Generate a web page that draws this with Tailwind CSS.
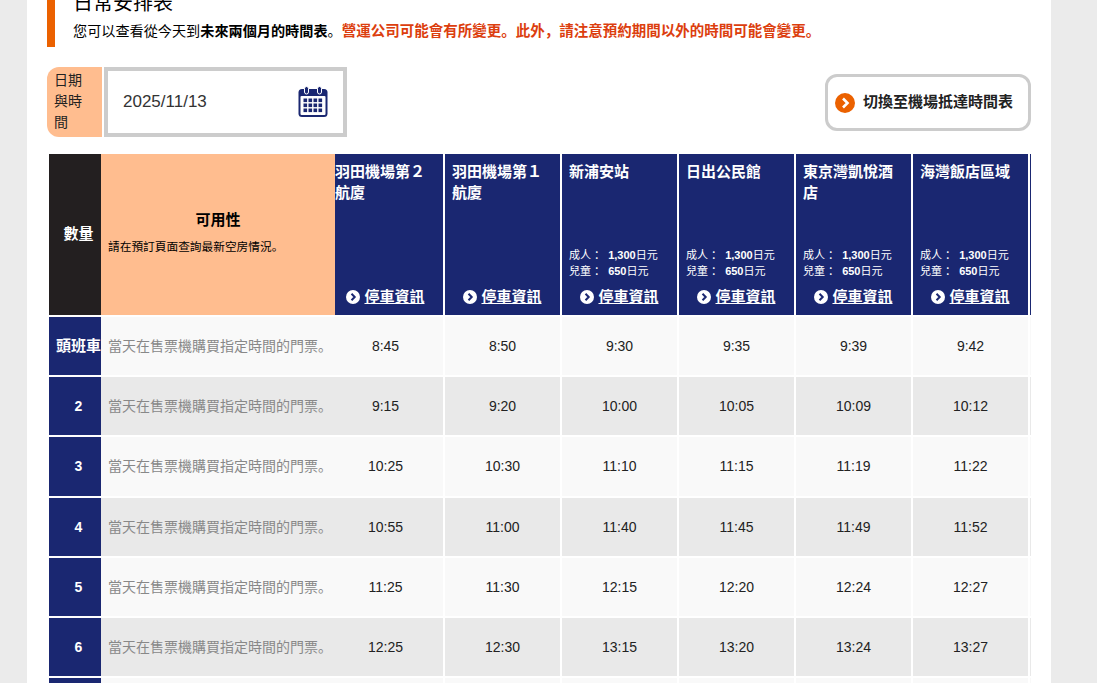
<!DOCTYPE html>
<html lang="zh">
<head>
    <meta charset="UTF-8">
    <title>日常安排表</title>
    <script src="https://cdn.jsdelivr.net/npm/@tailwindcss/browser@4"></script>
</head>
<body class="h-[683px] overflow-hidden bg-[#ebebeb] font-['Liberation_Sans','Noto_Sans_CJK_SC',sans-serif] text-[14px] text-[#222]">
    <main class="ml-[27px] w-[1024px] h-[683px] overflow-hidden bg-white px-5">
        <!-- Heading -->
        <div class="-mt-[20px] border-l-8 border-[#eb6100] pl-[18px] pt-[10px] pb-[6px]">
            <h2 class="text-[20px] leading-[26px] font-normal text-black">日常安排表</h2>
            <p class="mt-[5px] text-[14.15px] leading-[20px] text-black whitespace-nowrap">您可以查看從今天到<b>未來兩個月的時間表</b>。<b class="text-[14.5px] text-[#dc3e0e]">營運公司可能會有所變更。此外，請注意預約期間以外的時間可能會變更。</b></p>
        </div>

        <!-- Date picker + switch -->
        <div class="mt-5 flex items-start justify-between h-[87px]">
            <div class="flex">
                <div class="w-[55px] h-[70px] rounded-l-[12px] bg-[#ffbd8f] pl-[7px] pr-[10px] pt-[3px] leading-[21px]">日期與時間</div>
                <div class="ml-[2px] w-[243px] h-[70px] border-4 border-[#ccc] bg-white flex items-center justify-between pl-[15px] pr-[15px]">
                    <span class="text-[17px] text-[#333]">2025/11/13</span>
                    <svg class="w-[30px] h-[32px]" viewBox="0 0 30 32">
                        <rect x="0.5" y="3" width="29" height="28" rx="3.5" fill="#1a2771"/>
                        <rect x="2.5" y="10" width="25" height="19" rx="1" fill="#fff"/>
                        <rect x="6.5" y="0.5" width="4" height="7.5" rx="2" fill="#1a2771" stroke="#fff"/>
                        <rect x="19.5" y="0.5" width="4" height="7.5" rx="2" fill="#1a2771" stroke="#fff"/>
                        <g fill="#1a2771">
                            <rect x="5.5" y="12.5" width="3.6" height="3.6"/><rect x="10.5" y="12.5" width="3.6" height="3.6"/><rect x="15.5" y="12.5" width="3.6" height="3.6"/><rect x="20.5" y="12.5" width="3.6" height="3.6"/>
                            <rect x="5.5" y="17.5" width="3.6" height="3.6"/><rect x="10.5" y="17.5" width="3.6" height="3.6"/><rect x="15.5" y="17.5" width="3.6" height="3.6"/><rect x="20.5" y="17.5" width="3.6" height="3.6"/>
                            <rect x="5.5" y="22.5" width="3.6" height="3.6"/><rect x="10.5" y="22.5" width="3.6" height="3.6"/><rect x="15.5" y="22.5" width="3.6" height="3.6"/><rect x="20.5" y="22.5" width="3.6" height="3.6"/>
                        </g>
                    </svg>
                </div>
            </div>
            <a class="mt-[7px] w-[206px] h-[57px] rounded-[12px] border-[3px] border-[#ccc] bg-white flex items-center pl-[7px] gap-2 text-[15px] font-bold whitespace-nowrap">
                <svg class="w-5 h-5 shrink-0" viewBox="0 0 20 20"><circle cx="10" cy="10" r="10" fill="#eb6100"/><path d="M8 5.5 12.5 10 8 14.5" fill="none" stroke="#fff" stroke-width="2.6"/></svg>
                切換至機場抵達時間表
            </a>
        </div>

        <!-- Timetable -->
        <div class="ml-[2px] w-[982px] overflow-hidden">
            <table class="table-fixed w-[983px] border-separate border-spacing-0">
                <colgroup>
                    <col class="w-[52px]"><col class="w-[234px]"><col class="w-[110px]"><col class="w-[117px]"><col class="w-[117px]"><col class="w-[117px]"><col class="w-[117px]"><col class="w-[117px]"><col class="w-[2px]">
                </colgroup>
                <thead>
                    <tr class="h-[163px]">
                        <th class="border-b-2 border-white bg-[#231f20] pl-[7px] text-white text-[15px]">數量</th>
                        <th class="border-b-2 border-white bg-[#ffbd8f] text-left font-normal text-black">
                            <div class="text-center text-[15px] leading-[20px] font-bold">可用性</div>
                            <p class="mt-[9px] pb-[4px] pl-[7px] text-[11.7px] leading-[16px]">請在預訂頁面查詢最新空房情況。</p>
                        </th>
                        <th class="border-b-2 border-r-2 border-white bg-[#1a2771] p-0 align-top text-left text-white">
                            <div class="h-[161px] pr-[7px] pt-[7px] flex flex-col">
                                <div class="text-[15px] leading-[21px] font-bold">羽田機場第２航廈</div>
                                <a class="mt-auto mb-[8px] flex items-center justify-center gap-[4px] text-[15px] leading-[20px] font-bold underline"><svg class="w-[14px] h-[14px]" viewBox="0 0 14 14"><circle cx="7" cy="7" r="7" fill="#fff"/><path d="M5.5 3.8 8.7 7 5.5 10.2" fill="none" stroke="#1a2771" stroke-width="2"/></svg>停車資訊</a>
                            </div>
                        </th>
                        <th class="border-b-2 border-r-2 border-white bg-[#1a2771] p-0 align-top text-left text-white">
                            <div class="h-[161px] px-[7px] pt-[7px] flex flex-col">
                                <div class="text-[15px] leading-[21px] font-bold">羽田機場第１航廈</div>
                                <a class="mt-auto mb-[8px] flex items-center justify-center gap-[4px] text-[15px] leading-[20px] font-bold underline"><svg class="w-[14px] h-[14px]" viewBox="0 0 14 14"><circle cx="7" cy="7" r="7" fill="#fff"/><path d="M5.5 3.8 8.7 7 5.5 10.2" fill="none" stroke="#1a2771" stroke-width="2"/></svg>停車資訊</a>
                            </div>
                        </th>
                        <th class="border-b-2 border-r-2 border-white bg-[#1a2771] p-0 align-top text-left text-white">
                            <div class="h-[161px] px-[7px] pt-[7px] flex flex-col">
                                <div class="text-[15px] leading-[21px] font-bold">新浦安站</div>
                                <div class="mt-auto text-[11px] leading-[16px] font-normal whitespace-nowrap">成人 ： <b>1,300</b>日元<br>兒童 ： <b>650</b>日元</div>
                                <a class="mt-[8px] mb-[8px] flex items-center justify-center gap-[4px] text-[15px] leading-[20px] font-bold underline"><svg class="w-[14px] h-[14px]" viewBox="0 0 14 14"><circle cx="7" cy="7" r="7" fill="#fff"/><path d="M5.5 3.8 8.7 7 5.5 10.2" fill="none" stroke="#1a2771" stroke-width="2"/></svg>停車資訊</a>
                            </div>
                        </th>
                        <th class="border-b-2 border-r-2 border-white bg-[#1a2771] p-0 align-top text-left text-white">
                            <div class="h-[161px] px-[7px] pt-[7px] flex flex-col">
                                <div class="text-[15px] leading-[21px] font-bold">日出公民館</div>
                                <div class="mt-auto text-[11px] leading-[16px] font-normal whitespace-nowrap">成人 ： <b>1,300</b>日元<br>兒童 ： <b>650</b>日元</div>
                                <a class="mt-[8px] mb-[8px] flex items-center justify-center gap-[4px] text-[15px] leading-[20px] font-bold underline"><svg class="w-[14px] h-[14px]" viewBox="0 0 14 14"><circle cx="7" cy="7" r="7" fill="#fff"/><path d="M5.5 3.8 8.7 7 5.5 10.2" fill="none" stroke="#1a2771" stroke-width="2"/></svg>停車資訊</a>
                            </div>
                        </th>
                        <th class="border-b-2 border-r-2 border-white bg-[#1a2771] p-0 align-top text-left text-white">
                            <div class="h-[161px] px-[7px] pt-[7px] flex flex-col">
                                <div class="text-[15px] leading-[21px] font-bold">東京灣凱悅酒店</div>
                                <div class="mt-auto text-[11px] leading-[16px] font-normal whitespace-nowrap">成人 ： <b>1,300</b>日元<br>兒童 ： <b>650</b>日元</div>
                                <a class="mt-[8px] mb-[8px] flex items-center justify-center gap-[4px] text-[15px] leading-[20px] font-bold underline"><svg class="w-[14px] h-[14px]" viewBox="0 0 14 14"><circle cx="7" cy="7" r="7" fill="#fff"/><path d="M5.5 3.8 8.7 7 5.5 10.2" fill="none" stroke="#1a2771" stroke-width="2"/></svg>停車資訊</a>
                            </div>
                        </th>
                        <th class="border-b-2 border-r-2 border-white bg-[#1a2771] p-0 align-top text-left text-white">
                            <div class="h-[161px] px-[7px] pt-[7px] flex flex-col">
                                <div class="text-[15px] leading-[21px] font-bold">海灣飯店區域</div>
                                <div class="mt-auto text-[11px] leading-[16px] font-normal whitespace-nowrap">成人 ： <b>1,300</b>日元<br>兒童 ： <b>650</b>日元</div>
                                <a class="mt-[8px] mb-[8px] flex items-center justify-center gap-[4px] text-[15px] leading-[20px] font-bold underline"><svg class="w-[14px] h-[14px]" viewBox="0 0 14 14"><circle cx="7" cy="7" r="7" fill="#fff"/><path d="M5.5 3.8 8.7 7 5.5 10.2" fill="none" stroke="#1a2771" stroke-width="2"/></svg>停車資訊</a>
                            </div>
                        </th>
                        <th class="border-b-2 border-white bg-[#1a2771] p-0"></th>
                    </tr>
                </thead>
                <tbody class="text-center">
                    <tr class="h-[60px] bg-[#f9f9f9]">
                        <th class="border-b-2 border-white bg-[#1a2771] pl-[7px] text-white text-[15px] whitespace-nowrap">頭班車</th>
                        <td class="border-b-2 border-white pl-[7px] text-left text-[#888] whitespace-nowrap">當天在售票機購買指定時間的門票。</td>
                        <td class="border-b-2 border-r-2 border-white pr-[7px]">8:45</td><td class="border-b-2 border-r-2 border-white">8:50</td><td class="border-b-2 border-r-2 border-white">9:30</td><td class="border-b-2 border-r-2 border-white">9:35</td><td class="border-b-2 border-r-2 border-white">9:39</td><td class="border-b-2 border-r-2 border-white">9:42</td><td class="border-b-2 border-white"></td>
                    </tr>
                    <tr class="h-[60px] bg-[#e9e9e9]">
                        <th class="border-b-2 border-white bg-[#1a2771] pl-[7px] text-white">2</th>
                        <td class="border-b-2 border-white pl-[7px] text-left text-[#888] whitespace-nowrap">當天在售票機購買指定時間的門票。</td>
                        <td class="border-b-2 border-r-2 border-white pr-[7px]">9:15</td><td class="border-b-2 border-r-2 border-white">9:20</td><td class="border-b-2 border-r-2 border-white">10:00</td><td class="border-b-2 border-r-2 border-white">10:05</td><td class="border-b-2 border-r-2 border-white">10:09</td><td class="border-b-2 border-r-2 border-white">10:12</td><td class="border-b-2 border-white"></td>
                    </tr>
                    <tr class="h-[61px] bg-[#f9f9f9]">
                        <th class="border-b-2 border-white bg-[#1a2771] pl-[7px] text-white">3</th>
                        <td class="border-b-2 border-white pl-[7px] text-left text-[#888] whitespace-nowrap">當天在售票機購買指定時間的門票。</td>
                        <td class="border-b-2 border-r-2 border-white pr-[7px]">10:25</td><td class="border-b-2 border-r-2 border-white">10:30</td><td class="border-b-2 border-r-2 border-white">11:10</td><td class="border-b-2 border-r-2 border-white">11:15</td><td class="border-b-2 border-r-2 border-white">11:19</td><td class="border-b-2 border-r-2 border-white">11:22</td><td class="border-b-2 border-white"></td>
                    </tr>
                    <tr class="h-[60px] bg-[#e9e9e9]">
                        <th class="border-b-2 border-white bg-[#1a2771] pl-[7px] text-white">4</th>
                        <td class="border-b-2 border-white pl-[7px] text-left text-[#888] whitespace-nowrap">當天在售票機購買指定時間的門票。</td>
                        <td class="border-b-2 border-r-2 border-white pr-[7px]">10:55</td><td class="border-b-2 border-r-2 border-white">11:00</td><td class="border-b-2 border-r-2 border-white">11:40</td><td class="border-b-2 border-r-2 border-white">11:45</td><td class="border-b-2 border-r-2 border-white">11:49</td><td class="border-b-2 border-r-2 border-white">11:52</td><td class="border-b-2 border-white"></td>
                    </tr>
                    <tr class="h-[60px] bg-[#f9f9f9]">
                        <th class="border-b-2 border-white bg-[#1a2771] pl-[7px] text-white">5</th>
                        <td class="border-b-2 border-white pl-[7px] text-left text-[#888] whitespace-nowrap">當天在售票機購買指定時間的門票。</td>
                        <td class="border-b-2 border-r-2 border-white pr-[7px]">11:25</td><td class="border-b-2 border-r-2 border-white">11:30</td><td class="border-b-2 border-r-2 border-white">12:15</td><td class="border-b-2 border-r-2 border-white">12:20</td><td class="border-b-2 border-r-2 border-white">12:24</td><td class="border-b-2 border-r-2 border-white">12:27</td><td class="border-b-2 border-white"></td>
                    </tr>
                    <tr class="h-[60px] bg-[#e9e9e9]">
                        <th class="border-b-2 border-white bg-[#1a2771] pl-[7px] text-white">6</th>
                        <td class="border-b-2 border-white pl-[7px] text-left text-[#888] whitespace-nowrap">當天在售票機購買指定時間的門票。</td>
                        <td class="border-b-2 border-r-2 border-white pr-[7px]">12:25</td><td class="border-b-2 border-r-2 border-white">12:30</td><td class="border-b-2 border-r-2 border-white">13:15</td><td class="border-b-2 border-r-2 border-white">13:20</td><td class="border-b-2 border-r-2 border-white">13:24</td><td class="border-b-2 border-r-2 border-white">13:27</td><td class="border-b-2 border-white"></td>
                    </tr>
                    <tr class="h-[60px] bg-[#f9f9f9]">
                        <th class="bg-[#1a2771]"></th><td></td><td class="border-r-2 border-white"></td><td class="border-r-2 border-white"></td><td class="border-r-2 border-white"></td><td class="border-r-2 border-white"></td><td class="border-r-2 border-white"></td><td class="border-r-2 border-white"></td><td></td>
                    </tr>
                </tbody>
            </table>
        </div>
    </main>
</body>
</html>
